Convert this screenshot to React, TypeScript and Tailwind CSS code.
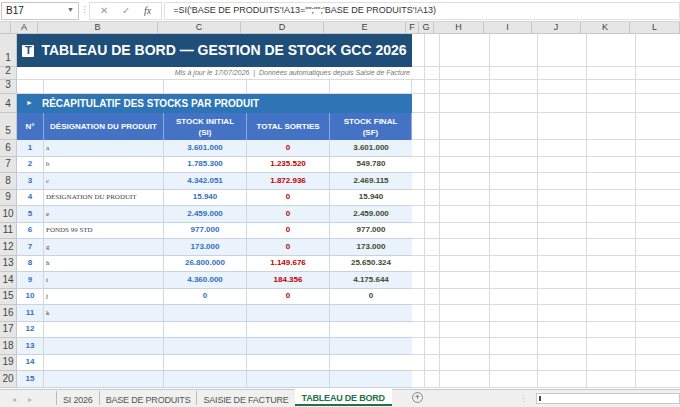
import React from 'react'

const F = { fontFamily: '"Liberation Sans", Arial, sans-serif' }
const rightCols = [13, 15, 50, 48, 49, 49, 50]

type Item = { n: number; name: string; si: string; ts: string; sf: string }
const items: Item[] = [
  { n: 1, name: 'a', si: '3.601.000', ts: '0', sf: '3.601.000' },
  { n: 2, name: 'b', si: '1.785.300', ts: '1.235.520', sf: '549.780' },
  { n: 3, name: 'c', si: '4.342.051', ts: '1.872.936', sf: '2.469.115' },
  { n: 4, name: 'DÉSIGNATION DU PRODUIT', si: '15.940', ts: '0', sf: '15.940' },
  { n: 5, name: 'e', si: '2.459.000', ts: '0', sf: '2.459.000' },
  { n: 6, name: 'FONDS 99 STD', si: '977.000', ts: '0', sf: '977.000' },
  { n: 7, name: 'g', si: '173.000', ts: '0', sf: '173.000' },
  { n: 8, name: 'h', si: '26.800.000', ts: '1.149.676', sf: '25.650.324' },
  { n: 9, name: 'i', si: '4.360.000', ts: '184.356', sf: '4.175.644' },
  { n: 10, name: 'j', si: '0', ts: '0', sf: '0' },
  { n: 11, name: 'k', si: '', ts: '', sf: '' },
  { n: 12, name: '', si: '', ts: '', sf: '' },
  { n: 13, name: '', si: '', ts: '', sf: '' },
  { n: 14, name: '', si: '', ts: '', sf: '' },
  { n: 15, name: '', si: '', ts: '', sf: '' },
]

function Row({ num, h, children }: { num: number; h: number; children: React.ReactNode }) {
  return (
    <div className="flex shrink-0" style={{ height: h }}>
      <div className="w-[17px] shrink-0 bg-[#e6e6e6] border-r border-b border-[#c8c8c8] text-[10px] text-[#444] flex items-end justify-center pb-[1px]">{num}</div>
      <div className="w-[395px] shrink-0 flex">{children}</div>
      {rightCols.map((w, i) => (
        <div key={i} className="shrink-0 border-r border-b border-[#dadada] bg-white" style={{ width: w }} />
      ))}
    </div>
  )
}

export default function App() {
  const colW = [27, 120, 83, 83, 82]
  return (
    <div className="w-[680px] h-[407px] overflow-hidden bg-white flex flex-col text-[#222]" style={F}>
      <div className="h-[22px] shrink-0 flex items-center border-b border-[#d4d4d4] bg-white text-[10px]">
        <div className="w-[78px] h-[18px] ml-[1px] border border-[#c6c6c6] flex items-center px-1 justify-between">
          <span>B17</span><span className="text-[7px] text-[#666]">▼</span>
        </div>
        <div className="w-[10px] text-center text-[#aaa] text-[9px]">⋮</div>
        <div className="flex items-center gap-[14px] px-[10px] text-[#999] h-[18px] border border-[#e0e0e0]">
          <span>✕</span><span>✓</span><span className="italic text-[#555]" style={{ fontFamily: '"Liberation Serif", serif' }}>fx</span>
        </div>
        <div className="flex-1 h-[18px] ml-[2px] border border-[#e0e0e0] px-2 flex items-center text-[9px] text-[#333]">=SI('BASE DE PRODUITS'!A13="";"";'BASE DE PRODUITS'!A13)</div>
      </div>
      <div className="flex shrink-0" style={{ height: 12 }}>
        <div className="w-[17px] bg-[#e6e6e6] border-r border-b border-[#c8c8c8]" />
        {[...colW, ...rightCols].map((w, i) => (
          <div key={i} className="shrink-0 bg-[#e6e6e6] border-r border-b border-[#c8c8c8] text-[9px] text-[#444] flex items-center justify-center leading-none" style={{ width: w }}>
            {'ABCDEFGHIJKL'[i]}
          </div>
        ))}
      </div>
      <Row num={1} h={33}>
        <div className="flex-1 bg-[#1f4e79] flex items-center justify-center gap-[7px] text-white font-bold text-[14px] whitespace-nowrap">
          <span className="w-[12px] h-[12px] bg-white rounded-[1px] flex items-center justify-center">
            <span className="text-[#1f4e79] text-[11px] leading-none font-black">T</span>
          </span>
          TABLEAU DE BORD — GESTION DE STOCK GCC 2026
        </div>
      </Row>
      <Row num={2} h={13}>
        <div className="flex-1 border-b border-[#dadada] text-[7px] italic text-[#777] flex items-center justify-end pr-[2px] whitespace-nowrap">
          Mis à jour le 17/07/2026 &nbsp;|&nbsp; Données automatiques depuis Saisie de Facture
        </div>
      </Row>
      <Row num={3} h={14}>
        {colW.map((w, i) => <div key={i} className="border-r border-b border-[#dadada]" style={{ width: w }} />)}
      </Row>
      <Row num={4} h={19}>
        <div className="flex-1 bg-[#2e75b6] flex items-center text-white font-bold text-[10px] pl-[9px]">
          <span className="text-[7px] mr-[9px]">►</span>RÉCAPITULATIF DES STOCKS PAR PRODUIT
        </div>
      </Row>
      <Row num={5} h={27}>
        {['N°', 'DÉSIGNATION DU PRODUIT', 'STOCK INITIAL\n(SI)', 'TOTAL SORTIES', 'STOCK FINAL\n(SF)'].map((t, i) => (
          <div key={i} className="bg-[#4472c4] border-r border-[#8eaadb] text-white font-bold text-[8px] flex items-center justify-center text-center whitespace-pre-line leading-[11px]" style={{ width: colW[i] }}>{t}</div>
        ))}
      </Row>
      {items.map((it, idx) => (
        <Row key={it.n} num={idx + 6} h={16.5}>
          <div className={`flex w-full border-b border-[#c8d3e0] ${idx % 2 === 0 ? 'bg-[#eaf2fc]' : 'bg-white'}`}>
            <div className="w-[27px] border-r border-[#d0d8e2] text-[8px] font-bold text-[#2f6fc4] flex items-center justify-center">{it.n}</div>
            <div className="w-[120px] border-r border-[#d0d8e2] text-[7px] text-[#444] flex items-center pl-[2px]" style={{ fontFamily: '"Liberation Serif", serif' }}>{it.name}</div>
            <div className="w-[83px] border-r border-[#d0d8e2] text-[8px] font-bold text-[#2f6fc4] flex items-center justify-center">{it.si}</div>
            <div className="w-[83px] border-r border-[#d0d8e2] text-[8px] font-bold text-[#c00000] flex items-center justify-center">{it.ts}</div>
            <div className="w-[82px] text-[8px] font-bold text-[#3b4a30] flex items-center justify-center">{it.sf}</div>
          </div>
        </Row>
      ))}
      <div className="flex-1" />
      <div className="h-[18px] shrink-0 bg-[#f0f0f0] border-t border-[#c8c8c8] flex items-start text-[9px] text-[#555]">
        <div className="w-[56px] flex gap-3 pl-3 pt-[4px] text-[#bbb] text-[8px]"><span>◂</span><span>▸</span></div>
        {['SI 2026', 'BASE DE PRODUITS', 'SAISIE DE FACTURE'].map(t => (
          <div key={t} className="px-[6px] pt-[3px] border-l border-[#bbb] h-[14px] mt-[1px] tracking-[-0.2px]">{t}</div>
        ))}
        <div className="px-[7px] pt-[3px] bg-white font-bold text-[#217346] h-[17px] border-b-2 border-[#217346] -mt-[1px] tracking-[-0.2px]">TABLEAU DE BORD</div>
        <div className="ml-[20px] mt-[2px] w-[11px] h-[11px] rounded-full border border-[#888] text-[9px] leading-[9px] text-center">+</div>
        <div className="ml-[96px] mt-[3px] text-[#bbb]">⋮</div>
        <div className="ml-[8px] mt-[3px] flex-1 h-[11px] bg-white border border-[#c8c8c8] flex items-center pl-[2px]"><span className="w-[2px] h-[5px] bg-[#444]" /></div>
      </div>
    </div>
  )
}
